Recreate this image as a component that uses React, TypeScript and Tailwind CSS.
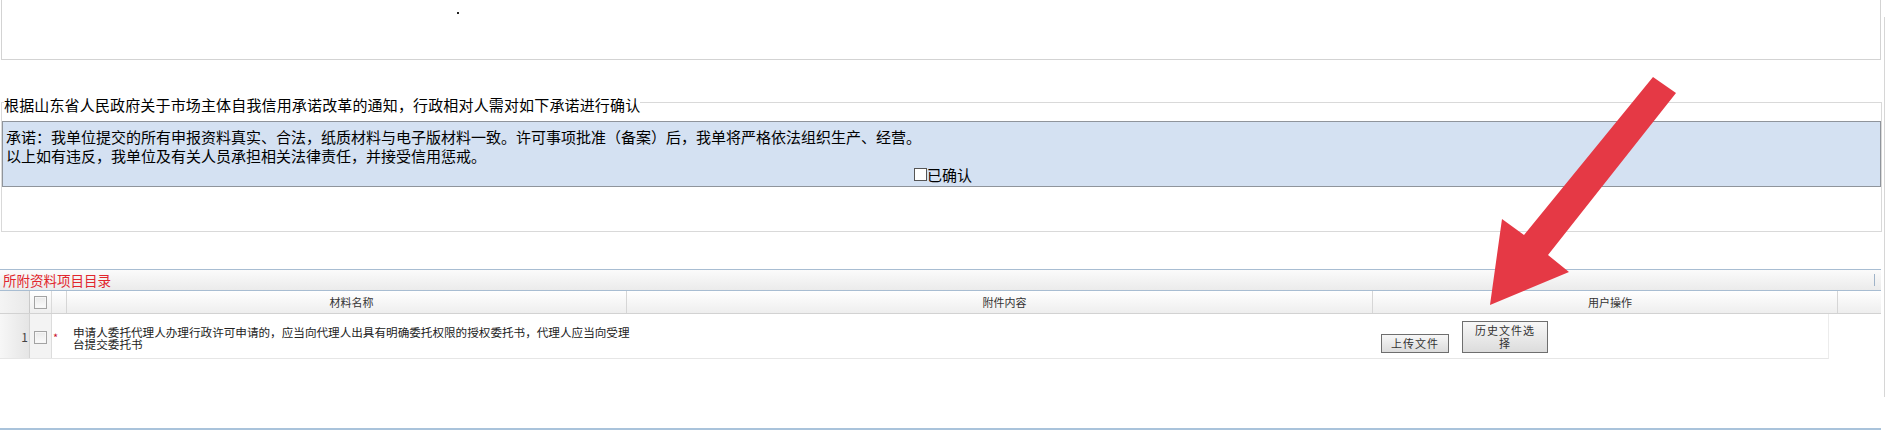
import React from "react";

function GridCheckbox() {
  return (
    <span className="inline-block w-[13px] h-[13px] border border-[#a3a3a3] bg-linear-to-b from-[#e9e9e9] to-[#fbfbfb] shadow-[inset_0_0_0_1px_#f6f6f6]" />
  );
}

function Btn({ children, w }: { children: React.ReactNode; w: string }) {
  return (
    <button
      className={`${w} border border-[#6e6e6e] bg-linear-to-b from-[#f7f7f7] to-[#dcdcdc] text-[11px] leading-[13px] tracking-[1px] text-[#333] py-[2px] font-['Noto_Sans_CJK_SC',sans-serif]`}
    >
      {children}
    </button>
  );
}

export default function App() {
  return (
    <div className="relative w-[1886px] h-[431px] overflow-hidden bg-white text-black font-['Noto_Sans_CJK_SC','Microsoft_YaHei',sans-serif]">
      {/* top box */}
      <div className="relative ml-px w-[1880px] h-[60px] border-x border-b border-[#d3d3d3]">
        <span className="absolute left-[455px] top-[12px] w-[2px] h-[2px] bg-[#222]" />
      </div>

      {/* fieldset */}
      <fieldset className="mt-[32px] ml-px w-[1881px] min-w-0 border border-[#d9d9d9]">
        <legend className="ml-[2px] text-[15px] leading-[20px] tracking-[0.15px] relative top-[3px]">
          根据山东省人民政府关于市场主体自我信用承诺改革的通知，行政相对人需对如下承诺进行确认
        </legend>
        <div className="mt-[9px] border border-[#8f949b] bg-[#d4e1f2] pl-[3px] pt-[5px] pb-[2px] text-[15px] leading-[19px]">
          <div>
            承诺：我单位提交的所有申报资料真实、合法，纸质材料与电子版材料一致。许可事项批准（备案）后，我单将严格依法组织生产、经营。
          </div>
          <div>以上如有违反，我单位及有关人员承担相关法律责任，并接受信用惩戒。</div>
          <div className="flex items-center justify-center">
            <span className="inline-block w-[13px] h-[13px] border border-[#555] bg-white" />
            <span>已确认</span>
          </div>
        </div>
        <div className="h-[44px]" />
      </fieldset>

      {/* attached materials panel */}
      <div className="mt-[37px] h-[162px] flex flex-col">
        <div className="w-[1881px] h-[22px] flex items-center border-y border-[#a8bdd2] bg-linear-to-b from-[#fbfbfb] to-[#ebebeb]">
          <span className="pl-[3px] text-[13.5px] leading-[20px] text-[#e1262d]">所附资料项目目录</span>
          <span className="ml-auto mr-[6px] w-px h-[12px] bg-[#9fb3c8]" />
        </div>

        {/* header row */}
        <div className="w-[1881px] h-[23px] flex border-b border-[#d2d2d2] bg-linear-to-b from-[#ffffff] to-[#eeeeee] text-[11px] text-[#333]">
          <div className="w-[30px] border-r border-[#c9c9c9] bg-linear-to-r from-[#f4f4f4] to-[#e9e9e9]" />
          <div className="w-[22px] flex items-center justify-center border-r border-[#dadada]">
            <GridCheckbox />
          </div>
          <div className="w-[15px] border-r border-[#d6d6d6]" />
          <div className="w-[560px] flex items-center justify-center pl-[10px] border-r border-[#d6d6d6]">材料名称</div>
          <div className="w-[746px] flex items-center justify-center pl-[10px] border-r border-[#d6d6d6]">附件内容</div>
          <div className="w-[465px] flex items-center justify-center pl-[10px] border-r border-[#d6d6d6]">用户操作</div>
          <div className="flex-1" />
        </div>

        {/* data row */}
        <div className="w-[1829px] h-[45px] flex border-b border-[#e6e6e6] border-r border-r-[#ececec]">
          <div className="w-[30px] flex items-center justify-end pr-[1px] pt-[2px] border-r border-[#d4d4d4] bg-linear-to-r from-[#f7f7f7] to-[#e5e5e5] text-[12px] text-[#444]">
            1
          </div>
          <div className="w-[22px] flex items-center justify-center pt-[2px] border-r border-[#dcdcdc] bg-[#f3f3f3]">
            <GridCheckbox />
          </div>
          <div className="w-[15px] flex items-center pl-[1px] pt-[3px] text-[11px] text-[#c8102e]">*</div>
          <div className="w-[560px] flex items-center pl-[6px] pt-[4px] text-[11.6px] leading-[12px] text-[#222] whitespace-nowrap">
            <div>
              申请人委托代理人办理行政许可申请的，应当向代理人出具有明确委托权限的授权委托书，代理人应当向受理
              <br />
              台提交委托书
            </div>
          </div>
          <div className="w-[746px]" />
          <div className="flex-1 flex items-end gap-[13px] pl-[8px] pb-[5px]">
            <Btn w="w-[68px]">上传文件</Btn>
            <Btn w="w-[86px]">
              历史文件选
              <br />
              择
            </Btn>
          </div>
        </div>

        <div className="mt-auto mb-px w-[1881px] h-[2px] bg-[#a9c3db]" />
      </div>

      {/* page right edge line */}
      <div className="absolute left-[1884px] top-[17px] w-px h-[380px] bg-[#d6d6d6]" />

      {/* red arrow annotation */}
      <svg className="absolute inset-0 pointer-events-none" width="1886" height="431" viewBox="0 0 1886 431">
        <polygon
          points="1653,77 1676,93 1548,255 1569,272 1490,305 1502,219 1524,235"
          fill="#e53945"
        />
      </svg>
    </div>
  );
}
